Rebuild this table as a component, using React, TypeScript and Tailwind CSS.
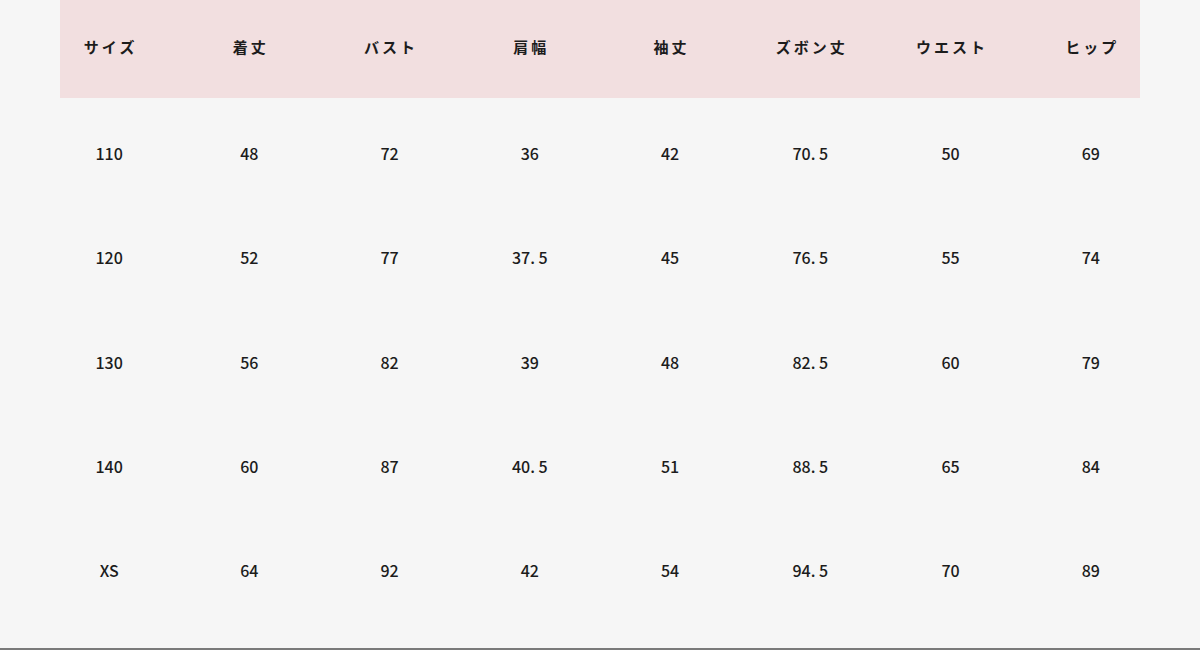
import React from "react";

const HEADERS = ["サイズ", "着丈", "バスト", "肩幅", "袖丈", "ズボン丈", "ウエスト", "ヒップ"];

const ROWS: string[][] = [
  ["110", "48", "72", "36", "42", "70. 5", "50", "69"],
  ["120", "52", "77", "37. 5", "45", "76. 5", "55", "74"],
  ["130", "56", "82", "39", "48", "82. 5", "60", "79"],
  ["140", "60", "87", "40. 5", "51", "88. 5", "65", "84"],
  ["XS", "64", "92", "42", "54", "94. 5", "70", "89"],
];

const font = "font-['Noto_Sans_CJK_JP','Noto_Sans_CJK_SC',sans-serif]";

const App: React.FC = () => {
  return (
    <div className={`h-[650px] w-[1200px] bg-[#f6f6f6] flex flex-col text-[#1c1c1c] ${font}`}>
      {/* Header */}
      <div className="mx-[60px] h-[98px] bg-[#f2dfe0] flex items-center justify-center">
        <div className="w-[1122px] shrink-0 grid grid-cols-8 -mt-[4px]">
          {HEADERS.map((h) => (
            <div key={h} className="text-center text-[15px] font-bold tracking-[3px] pl-[3px]">
              {h}
            </div>
          ))}
        </div>
      </div>

      {/* Rows */}
      <div className="mt-[3px] flex flex-col items-center">
        {ROWS.map((row, i) => (
          <div key={i} className="w-[1122px] h-[104.3px] grid grid-cols-8 items-center">
            {row.map((v, j) => (
              <div key={j} className="text-center text-[16px] font-medium whitespace-pre">
                {v}
              </div>
            ))}
          </div>
        ))}
      </div>

      <div className="flex-1" />
      <div className="h-[2px] bg-[#7a7a7a]" />
    </div>
  );
};

export default App;
